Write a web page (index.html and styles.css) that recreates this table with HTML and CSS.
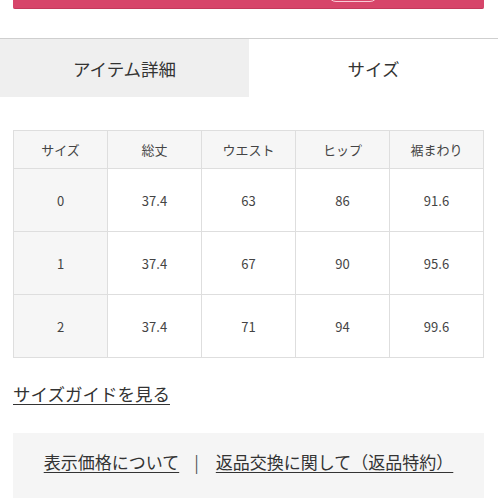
FILE: index.html
```html
<!DOCTYPE html>
<html lang="ja">
<head>
<meta charset="utf-8">
<link rel="stylesheet" href="styles.css">
</head>
<body>
<div class="topbar"><span class="topbtn"></span></div>
<div class="tabs">
  <div class="tab tab-off">アイテム詳細</div>
  <div class="tab tab-on">サイズ</div>
</div>
<table class="size">
  <thead>
    <tr><th>サイズ</th><th>総丈</th><th>ウエスト</th><th>ヒップ</th><th>裾まわり</th></tr>
  </thead>
  <tbody>
    <tr><th>0</th><td>37.4</td><td>63</td><td>86</td><td>91.6</td></tr>
    <tr><th>1</th><td>37.4</td><td>67</td><td>90</td><td>95.6</td></tr>
    <tr><th>2</th><td>37.4</td><td>71</td><td>94</td><td>99.6</td></tr>
  </tbody>
</table>
<div class="guide"><a href="#">サイズガイドを見る</a></div>
<div class="foot">
  <a href="#">表示価格について</a><span class="sep">|</span><a href="#">返品交換に関して（返品特約）</a>
</div>
</body>
</html>
```
FILE: styles.css
```css
html, body { margin: 0; padding: 0; background: #fff; }
body {
  font-family: "Noto Sans CJK JP", "Noto Sans", sans-serif;
  color: #333;
  width: 498px;
  height: 498px;
  overflow: hidden;
}
.topbar {
  margin: -31px 14px 0 13px;
  height: 40px;
  background: #d7456a;
  border-bottom: 1px solid #c33a5c;
  border-radius: 0 0 2px 2px;
  display: flex;
  align-items: flex-end;
  padding-bottom: 6px;
  box-sizing: border-box;
}
.topbtn {
  display: block;
  margin-left: 315px;
  width: 50px;
  height: 20px;
  border: 1.5px solid rgba(255, 225, 232, 0.85);
  border-radius: 8px;
  box-sizing: border-box;
}
.tabs {
  margin-top: 29px;
  border-top: 1px solid #cfcfcf;
  display: flex;
  height: 58px;
}
.tab {
  flex: 0 0 249px;
  display: flex;
  align-items: center;
  justify-content: center;
  font-size: 17.5px;
  color: #333;
}
.tab-off { background: #efefef; }
.tab-on { background: #fff; }
.size {
  margin: 33px 0 0 13px;
  width: 471px;
  border-collapse: collapse;
  table-layout: fixed;
  font-size: 13px;
  color: #444;
}
.size th, .size td {
  border: 1px solid #dedede;
  text-align: center;
  font-weight: normal;
  padding: 0;
}
.size thead th {
  height: 37px;
  background: #f6f6f6;
}
.size tbody th {
  background: #f6f6f6;
  height: 62px;
}
.size tbody td { height: 62px; background: #fff; }
.guide {
  margin: 24px 0 0 13px;
  font-size: 17.5px;
  line-height: 24px;
}
.guide a, .foot a { color: #333; text-decoration: underline; text-underline-offset: 3px; text-decoration-thickness: 1px; }
.foot {
  margin: 27px 14px 0 13px;
  height: 80px;
  background: #f5f5f5;
  display: flex;
  justify-content: center;
  align-items: flex-start;
  padding-top: 17px;
  box-sizing: border-box;
  font-size: 17px;
  line-height: 24px;
}
.sep { margin: 0 17px 0 15px; color: #555; }
```
